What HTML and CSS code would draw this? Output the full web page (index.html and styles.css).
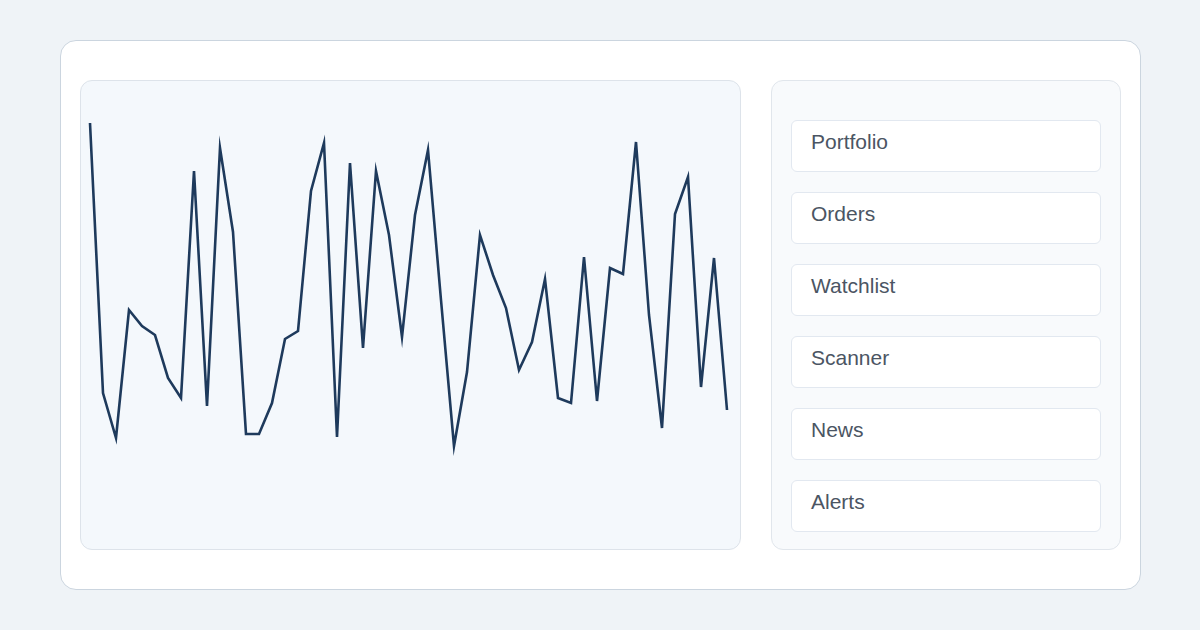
FILE: index.html
```html
<!DOCTYPE html>
<html lang="en">
<head>
<meta charset="utf-8">
<title>Dashboard</title>
<link rel="stylesheet" href="styles.css">
</head>
<body>
<div class="card">
  <div class="chart">
    <svg class="chart-svg" width="659" height="468" viewBox="81 81 659 468" xmlns="http://www.w3.org/2000/svg">
      <polyline fill="none" stroke="#1e3a5c" stroke-width="2.6" stroke-linejoin="miter" stroke-miterlimit="10"
        points="90,123 103,393 116,438 129,310 142,326 155,335 168,378 181,398 194,171 207,406 220,148 233,232 246,434 259,434 272,403 285,339 298,331 311,191 324,143 337,437 350,163 363,348 376,171 389,235 402,337 415,215 428,150 441,300 454,446 467,372 480,235 493,275 506,308 519,370 532,342 545,279 558,398 571,403 584,257 597,401 610,268 623,274 636,142 649,315 662,428 675,214 688,177 701,387 714,258 727,410"/>
    </svg>
  </div>
  <div class="side">
    <div class="item">Portfolio</div>
    <div class="item">Orders</div>
    <div class="item">Watchlist</div>
    <div class="item">Scanner</div>
    <div class="item">News</div>
    <div class="item">Alerts</div>
  </div>
</div>
</body>
</html>
```

FILE: styles.css
```css
html, body {
  margin: 0;
  padding: 0;
}
body {
  background: #eff3f7;
  font-family: "Liberation Sans", Arial, sans-serif;
  padding: 40px 59px 40px 60px;
  height: 630px;
  box-sizing: border-box;
}
.card {
  box-sizing: border-box;
  height: 550px;
  background: #ffffff;
  border: 1px solid #cbd5df;
  border-radius: 16px;
  padding: 39px 19px;
  display: flex;
  gap: 30px;
}
.chart {
  box-sizing: border-box;
  width: 661px;
  height: 470px;
  flex: none;
  background: #f4f8fc;
  border: 1px solid #dde3ea;
  border-radius: 12px;
  overflow: hidden;
}
.chart-svg {
  display: block;
}
.side {
  box-sizing: border-box;
  flex: 1;
  height: 470px;
  background: #f8fafc;
  border: 1px solid #e1e6ec;
  border-radius: 12px;
  padding: 39px 19px;
  display: flex;
  flex-direction: column;
  gap: 20px;
}
.item {
  box-sizing: border-box;
  height: 52px;
  flex: none;
  background: #ffffff;
  border: 1px solid #e2e8f0;
  border-radius: 6px;
  padding: 9px 19px;
  font-size: 21px;
  line-height: 24px;
  color: #4b5563;
}
```
